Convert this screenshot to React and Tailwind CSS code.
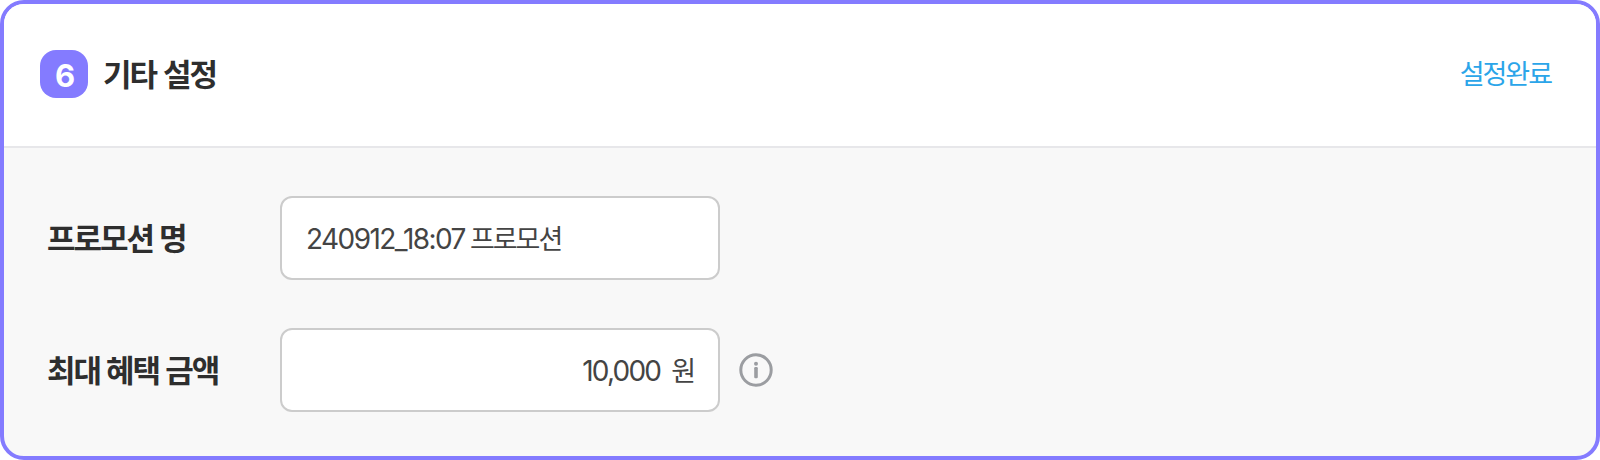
const ko = "font-['Noto_Sans_CJK_KR',sans-serif]";
const num = "font-['Inter',sans-serif]";

function Label({ children }) {
  return (
    <span className={`${ko} w-[233px] shrink-0 pb-[3px] whitespace-nowrap text-[31px] leading-[40px] font-bold tracking-[-2px] [word-spacing:1px] text-[#2e2e2e]`}>
      {children}
    </span>
  );
}

function InfoIcon() {
  return (
    <svg width="34" height="34" viewBox="0 0 34 34" fill="none" className="ml-[19px] shrink-0">
      <circle cx="17" cy="17" r="15.2" stroke="#9b9da1" strokeWidth="3" />
      <circle cx="17" cy="10.8" r="2" fill="#9b9da1" />
      <rect x="15.2" y="14" width="3.6" height="11.2" rx="1.2" fill="#9b9da1" />
    </svg>
  );
}

export default function App() {
  return (
    <div className="bg-white">
      <section className="flex h-[460px] w-[1600px] flex-col overflow-hidden rounded-[24px] border-4 border-[#847bff] bg-[#f8f8f8]">
        <header className="flex h-[144px] shrink-0 items-center border-b-2 border-[#e7e7ea] bg-white pr-[45px] pl-[36px] pb-[2px]">
          <span className={`${num} flex size-12 items-center justify-center rounded-[16px] bg-[#847bff] pt-[2px] pl-[2px] text-[31px] leading-none font-bold text-white`}>
            6
          </span>
          <h2 className={`${ko} ml-[15px] pb-[3px] text-[31px] leading-[40px] font-bold tracking-[-2px] [word-spacing:2px] text-[#2e2e2e]`}>기타 설정</h2>
          <span className={`${ko} ml-auto pb-[2px] text-[27px] leading-[40px] tracking-[-2px] text-[#2ba5e9]`}>설정완료</span>
        </header>
        <div className="flex flex-col gap-12 pt-12 pl-[43px]">
          <div className="flex items-center">
            <Label>프로모션 명</Label>
            <div className="flex h-[84px] w-[440px] items-center rounded-[12px] border-2 border-[#cccccc] bg-white px-[24px] whitespace-nowrap text-[#444444]">
              <span className={`${num} pt-px text-[28px] leading-[40px] tracking-[-1.57px]`}>240912_18:07</span>
              <span className={`${ko} ml-[5px] pb-px text-[27px] leading-[40px] tracking-[-2px]`}>프로모션</span>
            </div>
          </div>
          <div className="flex items-center">
            <Label>최대 혜택 금액</Label>
            <div className="flex h-[84px] w-[440px] items-center justify-end rounded-[12px] border-2 border-[#cccccc] bg-white px-[22px] whitespace-nowrap text-[#444444]">
              <span className={`${num} pt-px text-[28px] leading-[40px] tracking-[-1.8px]`}>10,000</span>
              <span className={`${ko} ml-[11px] text-[27px] leading-[40px]`}>원</span>
            </div>
            <InfoIcon />
          </div>
        </div>
      </section>
    </div>
  );
}
